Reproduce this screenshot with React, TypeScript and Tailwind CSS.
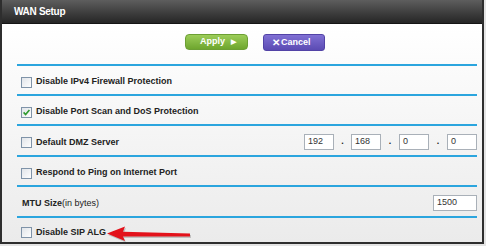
import React from "react";

const font = { fontFamily: '"Liberation Sans", Arial, sans-serif' };

function Box({ checked = false }: { checked?: boolean }) {
  return (
    <svg width="11" height="11" viewBox="0 0 11 11" className="shrink-0">
      <defs>
        <linearGradient id={checked ? "cbg1" : "cbg0"} x1="0" y1="0" x2="1" y2="1">
          <stop offset="0" stopColor="#dfe3e8" />
          <stop offset="1" stopColor="#ffffff" />
        </linearGradient>
      </defs>
      <rect x="0.5" y="0.5" width="10" height="10" fill={`url(#${checked ? "cbg1" : "cbg0"})`} stroke="#7f93a8" />
      {checked && <path d="M2.6 5.4 L4.6 7.6 L8.4 2.9" fill="none" stroke="#2f9a2f" strokeWidth="1.6" />}
    </svg>
  );
}

function Line() {
  return <div className="h-[2px] ml-[15px] mr-[5px] bg-[#2ba5de] shrink-0" />;
}

function Row({ h, children }: { h: string; children: React.ReactNode }) {
  return <div className={`flex items-center pl-[19px] pr-[5px] pt-[4px] shrink-0 ${h}`}>{children}</div>;
}

function Field({ value, w }: { value: string; w: string }) {
  return (
    <div className={`h-[16px] ${w} border border-[#a9b0b8] bg-white flex items-center pl-[3px] text-[9px] text-[#333]`}>
      {value}
    </div>
  );
}

export default function App() {
  return (
    <div className="w-[486px] h-[246px] bg-[#e4e4e4] relative" style={font}>
      <div className="w-[484px] h-[244px] border-x-2 border-b-2 border-[#2e2e2e] flex flex-col overflow-hidden">
        {/* Title bar */}
        <div className="h-[24px] shrink-0 bg-gradient-to-b from-[#5e5e5e] to-[#262626] border-b border-[#151515] flex items-center pl-[12px]">
          <span className="text-white font-bold text-[10px] tracking-[-0.3px]">WAN Setup</span>
        </div>

        {/* Content */}
        <div className="flex-1 flex flex-col bg-gradient-to-b from-white to-[#ebebeb] text-[9px] text-[#222]">
          <div className="h-[40px] shrink-0 flex items-start pt-[10px] pl-[183px] gap-[15px]">
            <div className="w-[63px] h-[16px] rounded-[4px] border border-[#6c9f34] bg-gradient-to-b from-[#9ccd58] to-[#6ea62e] flex items-center justify-center gap-[6px] text-white font-bold text-[9px] pl-[3px]">
              Apply <span className="text-[7px]">▶</span>
            </div>
            <div className="w-[62px] h-[17px] rounded-[3px] border border-[#5243a6] bg-gradient-to-b from-[#8070d4] to-[#5b4bb3] flex items-center pl-[8px] text-white font-bold text-[9px]">
              <span className="text-[10px] mr-[1px]">✕</span>Cancel
            </div>
          </div>

          <Line />
          <Row h="h-[28px]">
            <Box />
            <span className="ml-[4px] font-bold">Disable IPv4 Firewall Protection</span>
          </Row>
          <Line />
          <Row h="h-[28px]">
            <Box checked />
            <span className="ml-[4px] font-bold">Disable Port Scan and DoS Protection</span>
          </Row>
          <Line />
          <Row h="h-[29px]">
            <Box />
            <span className="ml-[4px] font-bold">Default DMZ Server</span>
            <div className="ml-auto flex items-center pb-[2px]">
              <Field value="192" w="w-[30px]" />
              <span className="w-[17px] text-center font-bold">.</span>
              <Field value="168" w="w-[30px]" />
              <span className="w-[18px] text-center font-bold">.</span>
              <Field value="0" w="w-[30px]" />
              <span className="w-[18px] text-center font-bold">.</span>
              <Field value="0" w="w-[30px]" />
            </div>
          </Row>
          <Line />
          <Row h="h-[28px]">
            <Box />
            <span className="ml-[4px] font-bold">Respond to Ping on Internet Port</span>
          </Row>
          <Line />
          <Row h="h-[29px]">
            <span className="ml-[1px] font-bold">MTU Size</span>
            <span>(in bytes)</span>
            <div className="ml-auto pb-[2px]">
              <Field value="1500" w="w-[44px]" />
            </div>
          </Row>
          <Line />
          <div className="flex items-center pl-[19px] pt-[5px] h-[24px]">
            <Box />
            <span className="ml-[4px] font-bold">Disable SIP ALG</span>
          </div>
        </div>
      </div>

      {/* Red annotation arrow */}
      <svg className="absolute left-[104px] top-[224px]" width="90" height="20" viewBox="0 0 90 20">
        <path d="M3 9.5 L21 2.5 L19 7.8 L86 9.6 L86 12.6 L19 12.4 L21 17 Z" fill="#000" opacity="0.18" transform="translate(1 1.5)" />
        <path d="M3 9.5 L21 2.5 L19 7.8 L86 9.6 L86 12.6 L19 12.4 L21 17 Z" fill="#e3121b" />
      </svg>
    </div>
  );
}
